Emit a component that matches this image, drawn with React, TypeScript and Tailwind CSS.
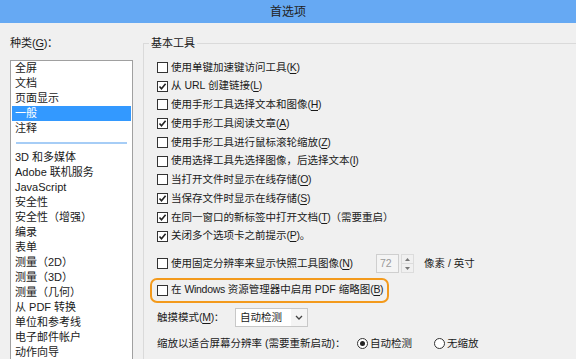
import React from "react";

const FONT = "font-['Liberation_Sans','Noto_Sans_CJK_SC',sans-serif]";

const CATEGORIES_TOP = ["全屏", "文档", "页面显示", "一般", "注释"];
const CATEGORIES = [
  "3D 和多媒体",
  "Adobe 联机服务",
  "JavaScript",
  "安全性",
  "安全性（增强）",
  "编录",
  "表单",
  "测量（2D）",
  "测量（3D）",
  "测量（几何）",
  "从 PDF 转换",
  "单位和参考线",
  "电子邮件帐户",
  "动作向导",
  "多媒体（旧版）",
];

const OPTIONS: { label: string; key: string; checked: boolean; suffix?: string }[] = [
  { label: "使用单键加速键访问工具", key: "K", checked: false },
  { label: "从 URL 创建链接", key: "L", checked: true },
  { label: "使用手形工具选择文本和图像", key: "H", checked: false },
  { label: "使用手形工具阅读文章", key: "A", checked: true },
  { label: "使用手形工具进行鼠标滚轮缩放", key: "Z", checked: false },
  { label: "使用选择工具先选择图像，后选择文本", key: "I", checked: false },
  { label: "当打开文件时显示在线存储", key: "O", checked: false },
  { label: "当保存文件时显示在线存储", key: "S", checked: true },
  { label: "在同一窗口的新标签中打开文档", key: "T", checked: true, suffix: "（需要重启）" },
  { label: "关闭多个选项卡之前提示", key: "P", checked: true, suffix: "。" },
];

function Key({ k }: { k: string }) {
  return (
    <span className="tracking-[-0.3px]">
      (<span className="underline underline-offset-2">{k}</span>)
    </span>
  );
}

function Checkbox({ checked }: { checked: boolean }) {
  return (
    <span className="w-[11px] h-[11px] border border-[#333] bg-white shrink-0 flex items-center justify-center">
      {checked && (
        <svg width="9" height="9" viewBox="0 0 9 9">
          <polyline points="1.5,4.5 3.5,6.8 7.6,1.8" fill="none" stroke="#222" strokeWidth="1.6" />
        </svg>
      )}
    </span>
  );
}

function Radio({ checked }: { checked: boolean }) {
  return (
    <span className="w-[11px] h-[11px] rounded-full border border-[#333] bg-white shrink-0 flex items-center justify-center">
      {checked && <span className="w-[5px] h-[5px] rounded-full bg-[#222]" />}
    </span>
  );
}

export default function App() {
  return (
    <div className={`w-[576px] h-[359px] overflow-hidden bg-[#f0f0f0] text-[10.5px] text-[#1a1a1a] ${FONT}`}>
      {/* Title bar */}
      <div className="h-[23px] bg-[#66a9f3] flex items-center justify-center text-[12px] text-[#222]">
        首选项
      </div>

      <div className="flex">
        {/* Category list */}
        <div className="w-[143px] shrink-0 pl-[10px] pr-[10px]">
          <div className="h-[37px] flex items-center leading-none pt-[3px] text-[11px]">
            种类<Key k="G" />：
          </div>
          <div className="h-[320px] border border-[#a0a0a0] bg-white px-[1px] leading-[15px] text-[11px]">
            {CATEGORIES_TOP.map((c) => (
              <div
                key={c}
                className={`h-[15px] px-[3px] ${c === "一般" ? "bg-[#3399ff] text-white" : ""}`}
              >
                {c}
              </div>
            ))}
            <div className="h-[14px] flex items-center px-[4px]">
              <div className="h-[2px] w-full bg-[#a6cdf6]" />
            </div>
            {CATEGORIES.map((c) => (
              <div key={c} className="h-[15px] px-[3px] whitespace-nowrap">
                {c}
              </div>
            ))}
          </div>
        </div>

        {/* Basic tools group */}
        <div className="flex-1 relative mt-[20px] border-l border-t border-[#dadada] h-[340px]">
          <div className="absolute -top-[8px] left-[5px] bg-[#f0f0f0] px-[2px] leading-[15px] text-[11px]">基本工具</div>
          <div className="pl-[13px] pt-[14px] flex flex-col">
            {OPTIONS.map((o) => (
              <div key={o.key} className="h-[18.75px] flex items-center gap-[3px] whitespace-nowrap">
                <Checkbox checked={o.checked} />
                <span>
                  {o.label}
                  <Key k={o.key} />
                  {o.suffix}
                </span>
              </div>
            ))}

            <div className="h-[20px] mt-[8px] flex items-center whitespace-nowrap">
              <div className="w-[219px] flex items-center gap-[3px]">
                <Checkbox checked={false} />
                <span>
                  使用固定分辨率来显示快照工具图像<Key k="N" />
                </span>
              </div>
              <div className="w-[23px] h-[19px] border border-[#cfcfcf] bg-[#f4f4f4] text-[#9a9a9a] flex items-center pl-[3px]">
                72
              </div>
              <div className="w-[13px] h-[19px] ml-[2px] border border-[#dcdcdc] flex flex-col">
                <div className="flex-1 flex items-center justify-center">
                  <svg width="5" height="3" viewBox="0 0 5 3"><polygon points="0,3 5,3 2.5,0" fill="#777" /></svg>
                </div>
                <div className="flex-1 flex items-center justify-center border-t border-[#dcdcdc]">
                  <svg width="5" height="3" viewBox="0 0 5 3"><polygon points="0,0 5,0 2.5,3" fill="#777" /></svg>
                </div>
              </div>
              <span className="ml-[10px]">像素 / 英寸</span>
            </div>

            <div className="mt-[4px] -ml-[7px] w-[239px] h-[25px] border-2 border-[#f39a1c] rounded-[7px] flex items-center gap-[3px] pl-[5px] whitespace-nowrap">
              <Checkbox checked={false} />
              <span>
                在 <span className="tracking-[-0.3px]">Windows</span> 资源管理器中启用 PDF 缩略图<Key k="B" />
              </span>
            </div>

            <div className="mt-[5px] h-[20px] flex items-center whitespace-nowrap">
              <span className="w-[78px]">
                触摸模式<Key k="M" />：
              </span>
              <div className="w-[73px] h-[19px] border border-[#c8c8c8] bg-white flex items-center">
                <span className="flex-1 pl-[4px]">自动检测</span>
                <span className="w-[16px] h-full bg-[#f4f4f4] flex items-center justify-center">
                  <svg width="8" height="5" viewBox="0 0 8 5">
                    <polyline points="1,1 4,4 7,1" fill="none" stroke="#444" strokeWidth="1.3" />
                  </svg>
                </span>
              </div>
            </div>

            <div className="mt-[6px] h-[20px] flex items-center whitespace-nowrap">
              <span className="w-[200px]">缩放以适合屏幕分辨率 (需要重新启动)：</span>
              <span className="flex items-center gap-[2px] w-[77px]">
                <Radio checked />
                自动检测
              </span>
              <span className="flex items-center gap-[2px]">
                <Radio checked={false} />
                无缩放
              </span>
            </div>
          </div>
        </div>
      </div>
    </div>
  );
}
